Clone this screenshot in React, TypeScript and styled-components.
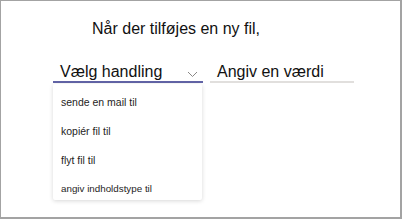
import React from 'react';
import styled, { createGlobalStyle } from 'styled-components';

const GlobalStyle = createGlobalStyle`
  html, body {
    margin: 0;
    padding: 0;
    background: #ffffff;
  }
  body {
    font-family: "Liberation Sans", Arial, sans-serif;
    color: #252423;
  }
`;

const Frame = styled.div`
  box-sizing: border-box;
  width: 402px;
  height: 219px;
  border: 1px solid #a3a3a3;
  border-right-width: 2px;
  border-bottom-width: 2px;
  background: #fff;
  padding: 19px 0 0 52px;
`;

const Title = styled.div`
  margin-left: 39px;
  font-size: 16px;
  line-height: 18px;
  color: #111;
`;

const FieldRow = styled.div`
  display: flex;
  gap: 7px;
  margin-top: 25px;
`;

const Column = styled.div`
  display: flex;
  flex-direction: column;
`;

const Field = styled.div<{ $width: number; $active?: boolean }>`
  box-sizing: border-box;
  width: ${(p) => p.$width}px;
  height: 20px;
  padding: 0 5px 0 7px;
  display: flex;
  align-items: flex-start;
  justify-content: space-between;
  font-size: 16px;
  line-height: 17px;
  color: #111;
  border-bottom: 2px solid ${(p) => (p.$active ? '#6264a7' : '#e1dfdd')};
`;

const Chevron = styled.svg`
  width: 11px;
  height: 7px;
  margin-top: 8px;
`;

const Menu = styled.div`
  box-sizing: border-box;
  width: 149px;
  height: 116px;
  margin-top: 1px;
  background: #fff;
  box-shadow: 0 1px 4px rgba(0, 0, 0, 0.16);
  border-radius: 2px;
  padding-top: 4px;
  overflow: hidden;
`;

const Item = styled.div<{ $size?: number }>`
  height: 28.7px;
  display: flex;
  align-items: center;
  padding-left: 8px;
  font-size: ${(p) => p.$size ?? 10.5}px;
  color: #252423;
  white-space: nowrap;
`;

const items: { label: string; size?: number }[] = [
  { label: 'sende en mail til' },
  { label: 'kopiér fil til' },
  { label: 'flyt fil til' },
  { label: 'angiv indholdstype til', size: 9.8 },
];

export default function App() {
  return (
    <>
      <GlobalStyle />
      <Frame>
        <Title>Når der tilføjes en ny fil,</Title>
        <FieldRow>
          <Column>
            <Field $width={150} $active>
              <span>Vælg handling</span>
              <Chevron viewBox="0 0 11 7">
                <path d="M1 1l4.5 4.5L10 1" fill="none" stroke="#8a8886" strokeWidth="1" />
              </Chevron>
            </Field>
            <Menu>
              {items.map((it) => (
                <Item key={it.label} $size={it.size}>
                  {it.label}
                </Item>
              ))}
            </Menu>
          </Column>
          <Field $width={144}>
            <span>Angiv en værdi</span>
          </Field>
        </FieldRow>
      </Frame>
    </>
  );
}
